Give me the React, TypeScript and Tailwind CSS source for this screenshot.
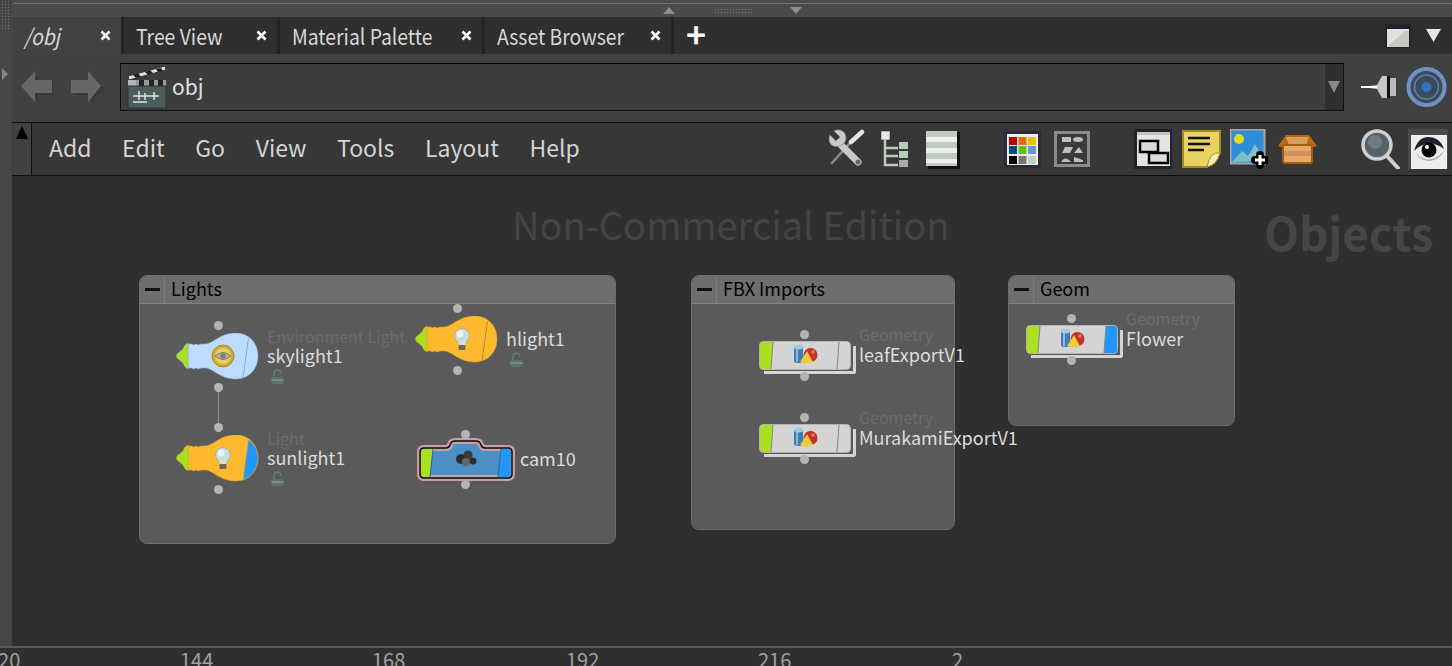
const font = { fontFamily: '"Noto Sans CJK SC", "Noto Sans", sans-serif' };

function Dot({ className }: { className: string }) {
  return <div className={`absolute h-[9px] w-[9px] rounded-full bg-[#b4b4b4] ${className}`} />;
}

function Lock({ className }: { className: string }) {
  return (
    <svg className={`absolute ${className}`} width="13" height="15" viewBox="0 0 13 15">
      <path d="M3 8V4.500a3.400 3.400 0 0 1 6.800 0V5" fill="none" stroke="#5f7d6d" strokeWidth="1.800" />
      <rect x="0.500" y="8" width="12" height="7" rx="1" fill="#5a7566" />
      <rect x="0.500" y="10.500" width="12" height="1.200" fill="#86a08f" />
    </svg>
  );
}

function SmallBulb() {
  return (
    <g>
      <circle cx="47" cy="20" r="7.500" fill="#c8dcd8" stroke="#8aa09c" strokeWidth="0.600" />
      <circle cx="45" cy="18" r="3.500" fill="#e9f2ef" />
      <path d="M43 25h8l-1 4h-6z" fill="#d4e2de" />
      <rect x="43.500" y="29" width="7" height="5" rx="1" fill="#6c6a60" />
    </g>
  );
}

function SkyEye() {
  return (
    <g>
      <circle cx="47" cy="23" r="11" fill="#d2ab2c" stroke="#a5882c" strokeWidth="1" />
      <circle cx="47" cy="23" r="8" fill="#e6cf6e" />
      <path d="M39 23q8-7 16 0q-8 7-16 0z" fill="#b8b08c" stroke="#85805f" strokeWidth="1" />
      <circle cx="47" cy="23" r="2.600" fill="#7d7b68" />
    </g>
  );
}

function Bulb({ fill, edge, flag, inner }: { fill: string; edge: string; flag: boolean; inner: React.ReactNode }) {
  return (
    <svg className="absolute left-0 top-0" width="83" height="47" viewBox="0 0 83 47">
      <path
        d="M12 11l4 0 1 1 3-1 2 1 3-1 5 0C38 10 44 0 60 0c13 0 22 10 22 23S73 46 60 46C44 46 38 36 30 35l-5 0-3 1-2-1-3 1-1-1-4 0z"
        fill={fill}
        stroke={edge}
        strokeWidth="0.600"
      />
      <path d="M12 10v26l-3-2-2-4-6-5q-1-2 0-4l6-5 2-4z" fill="#a9e01f" stroke={edge} strokeWidth="0.500" />
      {flag ? (
        <path d="M72.500 5C78 9 82 15 82 23c0 10-6 19-15 22z" fill="#2196ff" stroke={edge} strokeWidth="0.500" />
      ) : (
        <path d="M72.500 5L67 45" stroke={fill === '#bddcff' ? '#88a8e8' : '#b8862a'} strokeWidth="1" />
      )}
      {inner}
    </svg>
  );
}

function LightNode({
  className,
  type,
  name,
  fill,
  edge,
  flag,
  inner,
}: {
  className: string;
  type?: string;
  name: string;
  fill: string;
  edge: string;
  flag: boolean;
  inner: React.ReactNode;
}) {
  return (
    <div className={`absolute h-[47px] w-[83px] ${className}`}>
      <Dot className="left-[38px] top-[-12px]" />
      <Dot className="left-[38px] top-[50px]" />
      <Bulb fill={fill} edge={edge} flag={flag} inner={inner} />
      {type && (
        <div className="absolute left-[91px] top-[-9px] whitespace-nowrap text-[16px] leading-[24px] text-[#6c6c6c]">{type}</div>
      )}
      <div className="absolute left-[91px] top-[10px] whitespace-nowrap text-[18px] leading-[24px] text-[#dcdcdc]">{name}</div>
      <Lock className="left-[95px] top-[36px]" />
    </div>
  );
}

function GeoIcon() {
  return (
    <svg className="absolute left-[35px] top-[3px]" width="24" height="21" viewBox="0 0 24 21">
      <path d="M0 3v14q0 2 4.500 2t4.500-2V3z" fill="#3f7eb5" />
      <path d="M2 4v14l2 .5V4z" fill="#8ab8dc" />
      <ellipse cx="4.500" cy="3" rx="4.500" ry="2.500" fill="#a6c9e2" />
      <circle cx="16.500" cy="11" r="7" fill="#c62f22" />
      <circle cx="19" cy="8" r="2" fill="#e4695e" />
      <path d="M13 7l6 11q-6 3-13 0z" fill="#eecb3c" />
    </svg>
  );
}

function GeoNode({ className, name, flag }: { className: string; name: string; flag: boolean }) {
  return (
    <div className={`absolute h-[29px] w-[92px] ${className}`}>
      <Dot className="left-[41px] top-[-11px]" />
      <div className="absolute left-[5px] top-[5px] h-[28px] w-[92px] rounded-br-[3px] border-b-[3px] border-r-[3px] border-[#d4d4d4]" />
      <svg className="absolute left-0 top-0" width="92" height="29" viewBox="0 0 92 29">
        <rect x="0.500" y="0.500" width="91" height="28" rx="4" fill="#d4d4d4" stroke="#b4b4b4" />
        <path d="M4 1h10l-2 27H4q-3 0-3-3V4q0-3 3-3z" fill="#a9e01f" />
        <path d="M14 1l-2 27" stroke="#888" strokeWidth="1" />
        {flag ? <path d="M80 1h8q3 0 3 3v21q0 3-3 3H78z" fill="#2196ff" /> : null}
        <path d="M80 1l-2 27" stroke="#888" strokeWidth="1" />
      </svg>
      <Dot className="left-[41px] top-[31px]" />
      <GeoIcon />
      <div className="absolute left-[100px] top-[-19px] whitespace-nowrap text-[16px] leading-[24px] text-[#6c6c6c]">Geometry</div>
      <div className="absolute left-[100px] top-[1px] whitespace-nowrap text-[18px] leading-[24px] text-[#dcdcdc]">{name}</div>
    </div>
  );
}

const camBody = 'M7 10h22q3 0 4-3q1-4 5-4h21q4 0 5 4q1 3 4 3h23q4 0 4 4v22q0 4-4 4H7q-4 0-4-4V14q0-4 4-4z';

function CamNode({ className }: { className: string }) {
  return (
    <div className={`absolute h-[43px] w-[98px] ${className}`}>
      <svg className="absolute left-0 top-0" width="98" height="43" viewBox="0 0 98 43">
        <path d={camBody} fill="#4a8fc6" stroke="#c99ea4" strokeWidth="6" />
        <path d="M7 11h9l-3 28H7q-3 0-3-3V14q0-3 3-3z" fill="#a9e01f" />
        <path d="M84 11h7q3 0 3 3v22q0 3-3 3H81z" fill="#2196ff" />
        <path d="M84 11l-3 28M16 11l-3 28" stroke="#36658a" strokeWidth="1" />
        <path d={camBody} fill="none" stroke="#0c0c0c" strokeWidth="1.500" />
        <circle cx="44" cy="21" r="5" fill="#2d2d2d" />
        <circle cx="51" cy="17" r="4.500" fill="#3a3a3a" />
        <circle cx="49" cy="24" r="4" fill="#666" />
        <circle cx="56" cy="23" r="3.500" fill="#2d2d2d" />
      </svg>
      <Dot className="left-[44px] top-[-8px]" />
      <Dot className="left-[44px] top-[42px]" />
      <div className="absolute left-[103px] top-[8px] whitespace-nowrap text-[18px] leading-[24px] text-[#dcdcdc]">cam10</div>
    </div>
  );
}

function NetBox({ className, title, children }: { className: string; title: string; children?: React.ReactNode }) {
  return (
    <div className={`absolute rounded-lg border border-[#6c6c6c] bg-[#5a5a5a] ${className}`}>
      <div className="flex h-[28px] items-center rounded-t-lg border-b border-[#808080] bg-[#6e6e6e]">
        <div className="flex h-full w-[25px] items-center justify-center border-r border-[#7c7c7c]">
          <div className="h-[3px] w-[15px] bg-[#111]" />
        </div>
        <span className="ml-[6px] mt-[-3px] text-[18px] text-black">{title}</span>
      </div>
      {children}
    </div>
  );
}

function Tab({ label, width, active }: { label: string; width: string; active?: boolean }) {
  return (
    <div
      className={`flex h-full items-center justify-between border-r-[3px] border-[#242424] pl-[12px] pr-[10px] ${width} ${
        active ? 'bg-[#424242]' : 'bg-[#2f2f2f]'
      }`}
    >
      <span className={`mt-[-2px] origin-left scale-x-[0.88] text-[22px] leading-none text-[#d8d8d8] ${active ? 'italic' : ''}`}>{label}</span>
      <svg width="11" height="11" viewBox="0 0 11 11">
        <path d="M1.500 1.500l8 8M9.500 1.500l-8 8" stroke="#fff" strokeWidth="2.600" />
      </svg>
    </div>
  );
}

function Toolbar() {
  return (
    <div className="flex h-full flex-1 items-center">
      <svg className="ml-[795px]" width="39" height="40" viewBox="0 0 39 40">
        <path d="M6 35L24 15" stroke="#3a3a3a" strokeWidth="6" strokeLinecap="round" />
        <path d="M5 34L23 14" stroke="#8c8c8c" strokeWidth="2.500" strokeLinecap="round" />
        <path d="M24 13L35 3" stroke="#e4e4e4" strokeWidth="4.500" strokeLinecap="round" />
        <path d="M12 14L31 33" stroke="#c9c9c9" strokeWidth="7" strokeLinecap="round" />
        <path d="M3 6l6 6 4-4-6-6c5-3 12 0 12 7 0 6-7 10-13 8-4-2-5-7-3-11z" fill="#c9c9c9" stroke="#777" strokeWidth="0.600" />
        <circle cx="31" cy="33" r="2.500" fill="#666" />
      </svg>
      <svg className="ml-[15px]" width="27" height="36" viewBox="0 0 27 36">
        <rect x="0" y="0" width="9" height="9" fill="#e8e8e8" stroke="#222" strokeWidth="0.500" />
        <path d="M4 9v25h13M4 17h13M4 25h13" fill="none" stroke="#bcccbc" strokeWidth="2.500" />
        <rect x="18" y="11" width="9" height="7" fill="#b7cbb9" />
        <rect x="18" y="20" width="9" height="7" fill="#b7cbb9" />
        <rect x="18" y="29" width="9" height="7" fill="#aaa" />
      </svg>
      <svg className="ml-[17px]" width="35" height="40" viewBox="0 0 35 40">
        <rect x="3" y="3" width="32" height="37" fill="#111" />
        <rect x="1" y="2" width="31" height="35" fill="#eeeeee" />
        <rect x="1" y="2" width="31" height="6" fill="#bccdbc" />
        <rect x="1" y="13" width="31" height="6" fill="#bccdbc" />
        <rect x="1" y="24" width="31" height="6" fill="#bccdbc" />
        <rect x="1" y="34" width="31" height="3" fill="#bccdbc" />
      </svg>
      <svg className="ml-[44px]" width="37" height="37" viewBox="0 0 37 37">
        <rect width="37" height="37" fill="#2a2a3a" />
        <rect x="3" y="3" width="31" height="31" fill="#eeeeee" />
        {[
          ['#c40000', 5, 6],
          ['#e86a00', 14.500, 6],
          ['#e8c000', 24, 6],
          ['#0a4a80', 5, 15],
          ['#5fbf10', 14.500, 15],
          ['#6c97cc', 24, 15],
          ['#000', 5, 25],
          ['#777', 14.500, 25],
          ['#bcd0c0', 24, 25],
        ].map(([c, x, y]) => (
          <rect key={`${c}`} x={x as number} y={y as number} width="8" height="8" fill={c as string} />
        ))}
      </svg>
      <svg className="ml-[13px]" width="36" height="36" viewBox="0 0 36 36">
        <rect x="1.500" y="1.500" width="33" height="33" fill="#3a3a3a" stroke="#8a8a8a" strokeWidth="3" />
        <rect x="8" y="6" width="9" height="5" fill="#bdbdbd" />
        <ellipse cx="24" cy="8.500" rx="5" ry="2.500" fill="#bdbdbd" />
        <path d="M8 22l3-6h8l-3 6z" fill="#bdbdbd" />
        <path d="M20 22l5-6 4 6z" fill="#bdbdbd" />
        <path d="M7 31q4-7 10 0z" fill="#bdbdbd" />
        <path d="M20 26l9 3v2h-9z" fill="#bdbdbd" />
      </svg>
      <svg className="ml-[44px]" width="38" height="40" viewBox="0 0 38 40">
        <rect width="38" height="40" fill="#22222e" />
        <rect x="3" y="3" width="33" height="34" fill="#e4e4e4" />
        <rect x="3" y="3" width="33" height="3" fill="#bcccbc" />
        <rect x="6" y="12" width="18" height="11" fill="#dcdcdc" stroke="#000" strokeWidth="2.500" />
        <rect x="15" y="24" width="19" height="10" fill="#dcdcdc" stroke="#000" strokeWidth="2.500" />
      </svg>
      <svg className="ml-[10px]" width="40" height="38" viewBox="0 0 40 38">
        <path d="M1 1h37v22L25 37H1z" fill="#e8d264" stroke="#a68a1c" strokeWidth="2" />
        <path d="M6 8h22M6 14h22M6 20h16" stroke="#111" strokeWidth="2.500" />
        <path d="M38 23q-10-2-13 14 10-2 13-14z" fill="#f8eeb0" stroke="#a68a1c" />
      </svg>
      <svg className="ml-[8px]" width="38" height="40" viewBox="0 0 38 40">
        <rect x="0.500" y="0.500" width="34" height="34" fill="#2f8ed8" stroke="#a8a8a8" strokeWidth="2" />
        <circle cx="9" cy="10" r="5" fill="#e6dc10" />
        <path d="M2 33l10-11 6 5 7-12 8 14v3z" fill="#7cc2c2" />
        <path d="M30 26v10M25 31h10" stroke="#000" strokeWidth="8" strokeLinecap="round" />
        <path d="M30 26v10M25 31h10" stroke="#fff" strokeWidth="3" />
      </svg>
      <svg className="ml-[9px]" width="41" height="30" viewBox="0 0 41 30">
        <path d="M1 12L9 1h23l8 11-6 2H7z" fill="#b56a12" />
        <path d="M9 3h23l-3 8H12z" fill="#d9a05c" />
        <rect x="6" y="11" width="29" height="18" rx="2" fill="#e2aa70" stroke="#a65d08" strokeWidth="2" />
        <rect x="7" y="17" width="27" height="5" fill="#cf9254" />
      </svg>
      <svg className="ml-[43px]" width="39" height="40" viewBox="0 0 39 40">
        <path d="M26 27l11 12" stroke="#cfcfcf" strokeWidth="4" strokeLinecap="round" />
        <circle cx="16" cy="16" r="14" fill="#56626a" stroke="#d0d0d0" strokeWidth="3.500" />
        <circle cx="14" cy="13" r="7" fill="#6f7b82" />
      </svg>
      <svg className="ml-[8px]" width="40" height="40" viewBox="0 0 40 40">
        <rect width="40" height="40" fill="#4a4a4a" />
        <rect x="3" y="6" width="36" height="34" fill="#eeeeee" />
        <path d="M6 22q14-14 30-2-4-12-16-12-10 0-14 14z" fill="#22222e" />
        <path d="M8 24q13 14 28-2-4 8-14 10-10 0-14-8z" fill="#aaa" />
        <circle cx="21" cy="21" r="7.500" fill="#000" />
        <circle cx="19" cy="18" r="2" fill="#fff" />
      </svg>
    </div>
  );
}

export default function App() {
  return (
    <div className="flex h-[666px] w-[1452px] flex-col overflow-hidden bg-[#2f2f2f]" style={font}>
      <div className="flex h-[646px]">
        {/* Left strip */}
        <div className="relative w-[12px] shrink-0 bg-[#464646]">
          <div className="absolute left-[1px] top-0 h-[30px] w-[9px] bg-[radial-gradient(#777_1px,transparent_1px)] bg-[length:3px_3px]" />
          <div className="absolute left-[2px] top-[68px] h-0 w-0 border-y-[6px] border-l-[6px] border-y-transparent border-l-[#858585]" />
        </div>

        <div className="flex min-w-0 flex-1 flex-col">
          {/* Top splitter */}
          <div className="relative h-[17px] shrink-0 bg-[#4b4b4b]">
            <div className="absolute left-[1px] right-0 top-[3px] h-px bg-[#777]" />
            <div className="absolute left-[651px] top-[7px] h-0 w-0 border-x-[6px] border-b-[7px] border-x-transparent border-b-[#8d8d8d]" />
            <div className="absolute left-[702px] top-[8px] h-[6px] w-[40px] bg-[radial-gradient(#777_1px,transparent_1px)] bg-[length:3px_3px]" />
            <div className="absolute left-[778px] top-[7px] h-0 w-0 border-x-[6px] border-t-[7px] border-x-transparent border-t-[#8d8d8d]" />
          </div>

          {/* Tabs */}
          <div className="flex h-[37px] shrink-0 items-center bg-[#2f2f2f]">
            <Tab label="/obj" width="w-[112px]" active />
            <Tab label="Tree View" width="w-[156px]" />
            <Tab label="Material Palette" width="w-[205px]" />
            <Tab label="Asset Browser" width="w-[189px]" />
            <span className="ml-[12px] mt-[-4px] text-[34px] font-bold leading-none text-white">+</span>
            <div className="ml-auto mr-[11px] flex items-center gap-[15px]">
              <svg width="26" height="24" viewBox="0 0 26 24">
                <rect width="26" height="24" fill="#22222e" />
                <rect x="2" y="5" width="22" height="18" fill="#e0e0e0" />
                <path d="M4 21L20 7h4v16H4z" fill="#c8c8c0" />
              </svg>
              <svg width="15" height="13" viewBox="0 0 15 13">
                <path d="M0 0h15l-7.500 13z" fill="#e8e8e8" />
              </svg>
            </div>
          </div>

          {/* Path bar */}
          <div className="flex h-[68px] shrink-0 items-center bg-[#414141] pb-[2px]">
            <svg className="ml-[8px]" width="36" height="36" viewBox="0 0 36 36">
              <path d="M6 20L19 6v8h14v12H19v8z" fill="#393939" />
              <path d="M1 17L15 2v9h17v13H15v9z" fill="#676767" />
            </svg>
            <svg className="ml-[14px]" width="35" height="36" viewBox="0 0 35 36">
              <path d="M34 20L22 6v8H6v12h16v8z" fill="#393939" />
              <path d="M31 17L18 2v9H1v13h17v9z" fill="#676767" />
            </svg>

            <div className="ml-[15px] flex h-[48px] w-[1224px] items-center border border-[#111] border-t-black bg-[#3d3d3d]">
              <svg className="ml-[6px]" width="41" height="44" viewBox="0 0 41 44">
                <path d="M1 11L38 1l1 4L2 15z" fill="#ddd" stroke="#333" />
                <path d="M6 10l5-2 3 4-5 1zM18 7l5-2 3 3-5 2zM29 4l5-1 2 3-5 1z" fill="#222" />
                <path d="M1 15h8v8H1z" fill="#aeb8b8" />
                <rect x="9" y="15" width="30" height="6" fill="#999" />
                <path d="M12 15h5v6h-5zM22 15h5v6h-5zM31 15h5v6h-5z" fill="#222" />
                <rect x="1" y="21" width="38" height="22" fill="#4b5d5c" stroke="#333" />
                <path d="M6 31h26M6 37h14M12 26v9M18 28v7M27 27v8" stroke="#dfe5e0" strokeWidth="1.500" />
              </svg>
              <span className="ml-[4px] mt-[-2px] text-[21px] leading-none text-[#e0e0e0]">obj</span>
              <div className="ml-auto flex h-full w-[18px] items-center justify-center bg-[#2f2f2f]">
                <div className="h-0 w-0 border-x-[6px] border-t-[12px] border-x-transparent border-t-[#8a8a8a]" />
              </div>
            </div>

            <svg className="ml-[16px]" width="38" height="32" viewBox="0 0 38 32">
              <path d="M1 16l16-2 5-9h5v22h-5l-5-9z" fill="#c7c7c7" />
              <path d="M1 16h16" stroke="#fff" strokeWidth="2" />
              <rect x="27" y="5" width="3" height="22" fill="#111" />
              <rect x="30" y="7" width="6" height="18" fill="#bbb" />
            </svg>
            <svg className="ml-[8px]" width="41" height="40" viewBox="0 0 41 40">
              <circle cx="20.500" cy="20" r="18" fill="#3c4a5a" stroke="#6b92c2" strokeWidth="4" />
              <circle cx="20.500" cy="20" r="12" fill="none" stroke="#5b82b2" strokeWidth="1.500" />
              <circle cx="20.500" cy="20" r="5" fill="#2f73bb" />
            </svg>
          </div>

          {/* Menu bar */}
          <div className="flex h-[54px] shrink-0 items-stretch border-y border-[#0e0e0e] bg-[#373737]">
            <div className="relative ml-[1px] w-[19px] border-r border-[#0e0e0e] bg-[#414141]">
              <div className="absolute left-[3px] top-[3px] h-0 w-0 border-x-[6px] border-b-[13px] border-x-transparent border-b-black" />
            </div>
            <div className="relative flex min-w-0 flex-1 items-center">
              <div className="absolute left-0 top-[-2px] flex h-full items-center gap-[30.600px] pl-[17px] text-[23px] leading-none text-[#d4d4d4]">
                <span>Add</span>
                <span>Edit</span>
                <span>Go</span>
                <span>View</span>
                <span>Tools</span>
                <span>Layout</span>
                <span>Help</span>
              </div>
              <div className="flex h-full w-full items-center">
                <Toolbar />
              </div>
            </div>
          </div>

          {/* Network canvas */}
          <div className="relative min-h-0 flex-1 bg-[#2f2f2f]">
            <div className="absolute left-[500px] top-[23px] whitespace-nowrap text-[38px] leading-[50px] text-[#444]">
              Non-Commercial Edition
            </div>
            <div className="absolute left-[1252px] top-[23px] whitespace-nowrap text-[45.500px] font-bold leading-[64px] text-[#464646]">
              Objects
            </div>

            <NetBox className="left-[127px] top-[99px] h-[269px] w-[477px]" title="Lights">
              <div className="absolute left-[78px] top-[113px] h-[41px] w-px bg-[#7f96ac]" />
              <LightNode
                className="left-[36px] top-[57px]"
                type="Environment Light"
                name="skylight1"
                fill="#bddcff"
                edge="#88a8e8"
                flag={false}
                inner={<SkyEye />}
              />
              <LightNode
                className="left-[275px] top-[40px]"
                name="hlight1"
                fill="#ffb92e"
                edge="#e0a020"
                flag={false}
                inner={<SmallBulb />}
              />
              <LightNode
                className="left-[36px] top-[159px]"
                type="Light"
                name="sunlight1"
                fill="#ffb92e"
                edge="#e0a020"
                flag
                inner={<SmallBulb />}
              />
              <CamNode className="left-[277px] top-[162px]" />
            </NetBox>

            <NetBox className="left-[679px] top-[99px] h-[255px] w-[264px]" title="FBX Imports">
              <GeoNode className="left-[67px] top-[65px]" name="leafExportV1" flag={false} />
              <GeoNode className="left-[67px] top-[148px]" name="MurakamiExportV1" flag={false} />
            </NetBox>

            <NetBox className="left-[996px] top-[99px] h-[151px] w-[227px]" title="Geom">
              <GeoNode className="left-[17px] top-[49px]" name="Flower" flag />
            </NetBox>
          </div>
        </div>
      </div>

      {/* Timeline ruler */}
      <div className="flex h-[20px] shrink-0 overflow-hidden border-t-2 border-[#5a5a5a] bg-[#2f2f2f] text-[20px] leading-[24px] text-[#a0a0a0]">
        <span className="ml-[-13px] w-[193px]">120</span>
        <span className="w-[192px]">144</span>
        <span className="w-[194px]">168</span>
        <span className="w-[192px]">192</span>
        <span className="w-[194px]">216</span>
        <span className="w-[192px]">2</span>
      </div>
    </div>
  );
}
